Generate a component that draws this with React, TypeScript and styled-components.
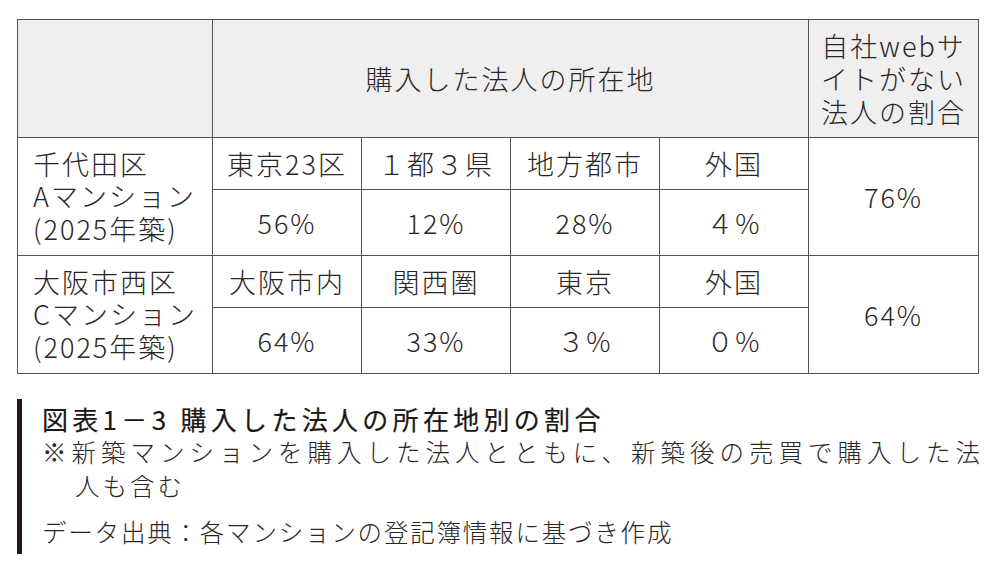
import styled, { createGlobalStyle } from 'styled-components';

const GlobalStyle = createGlobalStyle`
  html, body {
    margin: 0;
    padding: 0;
    background: #ffffff;
  }
  body {
    font-family: "Noto Sans CJK JP", "Noto Sans", sans-serif;
    color: #2a2624;
  }
`;

type Place = { name: string; share: string };
type Building = { label: string[]; places: Place[]; noSite: string };

const buildings: Building[] = [
  {
    label: ['千代田区', 'Aマンション', '(2025年築)'],
    places: [
      { name: '東京23区', share: '56%' },
      { name: '１都３県', share: '12%' },
      { name: '地方都市', share: '28%' },
      { name: '外国', share: '４%' },
    ],
    noSite: '76%',
  },
  {
    label: ['大阪市西区', 'Cマンション', '(2025年築)'],
    places: [
      { name: '大阪市内', share: '64%' },
      { name: '関西圏', share: '33%' },
      { name: '東京', share: '３%' },
      { name: '外国', share: '０%' },
    ],
    noSite: '64%',
  },
];

const App = () => {
  return (
    <>
      <GlobalStyle />
      <Page>
        <Table>
          <colgroup>
            <col style={{ width: 195 }} />
            <col style={{ width: 149 }} />
            <col style={{ width: 149 }} />
            <col style={{ width: 149 }} />
            <col style={{ width: 149 }} />
            <col style={{ width: 170 }} />
          </colgroup>
          <thead>
            <tr>
              <HeadCell />
              <HeadCell colSpan={4}>購入した法人の所在地</HeadCell>
              <HeadCell>
                <Stacked>
                  <span>自社webサ</span>
                  <span>イトがない</span>
                  <span>法人の割合</span>
                </Stacked>
              </HeadCell>
            </tr>
          </thead>
          <tbody>
            {buildings.map((b) => [
              <NameRow key={b.label[0] + '-names'}>
                <LabelCell rowSpan={2}>
                  <Stacked $align="left">
                    {b.label.map((line) => (
                      <span key={line}>{line}</span>
                    ))}
                  </Stacked>
                </LabelCell>
                {b.places.map((p) => (
                  <Cell key={p.name}>{p.name}</Cell>
                ))}
                <Cell rowSpan={2}>{b.noSite}</Cell>
              </NameRow>,
              <ShareRow key={b.label[0] + '-shares'}>
                {b.places.map((p) => (
                  <Cell key={p.name}>{p.share}</Cell>
                ))}
              </ShareRow>,
            ])}
          </tbody>
        </Table>

        <Caption>
          <Title>図表1－3 購入した法人の所在地別の割合</Title>
          <Note>
            <NoteLine>※新築マンションを購入した法人とともに、新築後の売買で購入した法</NoteLine>
            <NoteRest>人も含む</NoteRest>
          </Note>
          <Source>データ出典：各マンションの登記簿情報に基づき作成</Source>
        </Caption>
      </Page>
    </>
  );
};

export default App;

const Page = styled.div`
  width: 1000px;
  height: 576px;
  box-sizing: border-box;
  padding: 19px 22px 0 17px;
  overflow: hidden;
`;

const Table = styled.table`
  width: 961px;
  table-layout: fixed;
  border-collapse: collapse;
  font-size: 27px;
  letter-spacing: 2px;
  font-weight: 300;
  color: #2a2624;

  td,
  th {
    border: 1.5px solid #555353;
    padding: 0;
    text-align: center;
    vertical-align: middle;
  }
`;

const HeadCell = styled.th`
  height: 117px;
  background: #efefef;
  font-weight: 300;
`;

const Stacked = styled.div<{ $align?: 'left' | 'center' }>`
  display: flex;
  flex-direction: column;
  align-items: ${({ $align }) => ($align === 'left' ? 'flex-start' : 'center')};
  line-height: 33px;
  white-space: nowrap;
`;

const NameRow = styled.tr`
  height: 52px;
`;

const ShareRow = styled.tr`
  height: 66px;
`;

const Cell = styled.td`
  line-height: 32px;
`;

const LabelCell = styled.td`
  && {
    text-align: left;
    padding-left: 15px;
  }

  ${Stacked} {
    line-height: 32.5px;
  }
`;

const Caption = styled.div`
  margin-top: 25px;
  padding: 3px 0 5px 20px;
  border-left: 5px solid #231815;
  font-size: 24.5px;
  font-weight: 300;
  color: #2a2624;
  letter-spacing: 1.8px;
`;

const Title = styled.div`
  font-size: 26px;
  font-weight: 400;
  line-height: 33px;
  letter-spacing: 4.3px;
  white-space: nowrap;
  color: #1c1816;
  -webkit-text-stroke: 0.2px #1c1816;
`;

const Note = styled.div`
  width: 938px;
  line-height: 34px;
`;

const NoteLine = styled.div`
  white-space: nowrap;
  text-align: justify;
  text-align-last: justify;
  letter-spacing: 0;
`;

const NoteRest = styled.div`
  padding-left: 33px;
  letter-spacing: 3px;
`;

const Source = styled.div`
  margin-top: 12px;
  line-height: 34px;
  white-space: nowrap;
`;
